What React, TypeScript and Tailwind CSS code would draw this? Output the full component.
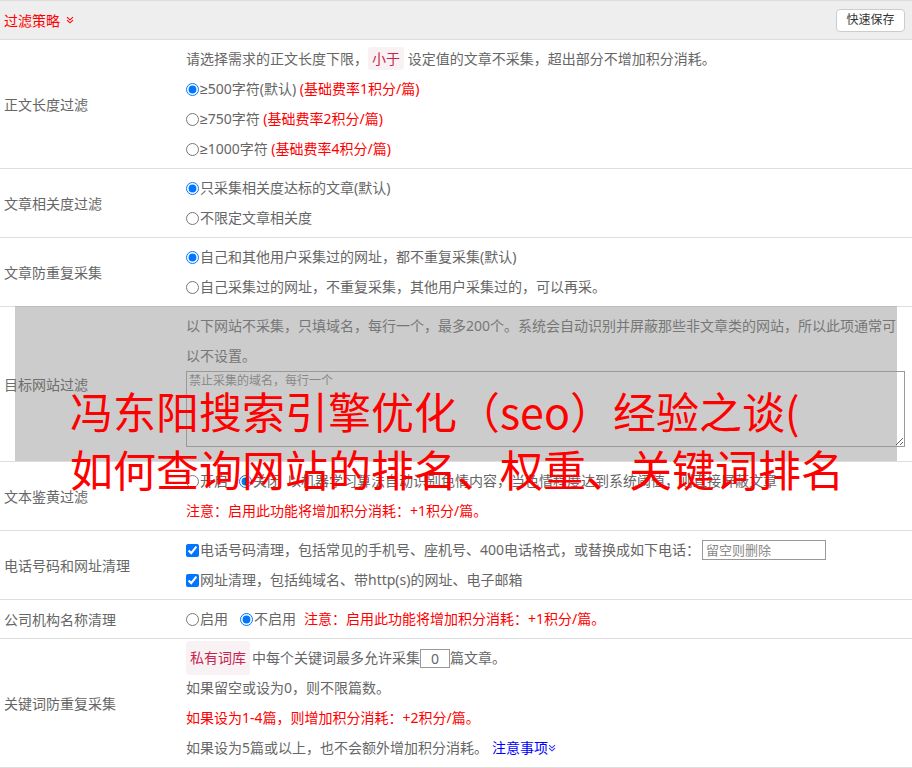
import type { ReactNode } from "react";

const font = "font-['Noto_Sans','Noto_Sans_CJK_SC',sans-serif]";

const Chevrons = ({ color }: { color: string }) => (
  <svg width="8" height="8" viewBox="0 0 8 8" className="inline-block align-[1px]">
    <path d="M1 1.2 L4 3.8 L7 1.2" fill="none" stroke={color} strokeWidth="1.1" />
    <path d="M1 4.2 L4 6.8 L7 4.2" fill="none" stroke={color} strokeWidth="1.1" />
  </svg>
);

const Radio = ({ checked = false }: { checked?: boolean }) => (
  <input
    type="radio"
    defaultChecked={checked}
    className="m-0 mr-px h-[13px] w-[13px] align-[-2px]"
  />
);

const Check = () => (
  <input
    type="checkbox"
    defaultChecked
    className="m-0 mr-px h-[13px] w-[13px] align-[-2px]"
  />
);

const Tag = ({ children }: { children: ReactNode }) => (
  <span className="rounded-[3px] bg-[#f9f2f4] px-[4px] py-[2px] text-[#c7254e]">
    {children}
  </span>
);

const Ge = () => <span className="font-['Liberation_Sans',sans-serif]">≥</span>;

const Row = ({ label, children }: { label: string; children: ReactNode }) => (
  <div className="flex border-b border-[#ddd]">
    <div className="flex w-[186px] shrink-0 items-center pl-1 text-[14px] text-[#666]">
      {label}
    </div>
    <div className="relative z-10 flex-1 py-1 text-[14px] leading-[30px] text-[#666]">
      {children}
    </div>
  </div>
);

export default function App() {
  return (
    <div className={`relative min-h-screen w-[912px] overflow-hidden bg-white ${font}`}>
      <div className="flex h-[40px] items-center justify-between border-y border-[#ddd] bg-[#eee] pl-1 pr-[7px]">
        <div className="flex items-center gap-[6px] text-[14px] text-[#f00]">
          过滤策略
          <Chevrons color="#f00" />
        </div>
        <button className="h-[23px] w-[69px] rounded-[4px] border border-[#ccc] bg-white text-[12px] text-[#333]">
          快速保存
        </button>
      </div>

      <Row label="正文长度过滤">
        <div>
          请选择需求的正文长度下限，<Tag>小于</Tag> 设定值的文章不采集，超出部分不增加积分消耗。
        </div>
        <div>
          <Radio checked />
          <Ge />500字符(默认) <span className="text-[#f00]">(基础费率1积分/篇)</span>
        </div>
        <div>
          <Radio />
          <Ge />750字符 <span className="text-[#f00]">(基础费率2积分/篇)</span>
        </div>
        <div>
          <Radio />
          <Ge />1000字符 <span className="text-[#f00]">(基础费率4积分/篇)</span>
        </div>
      </Row>

      <Row label="文章相关度过滤">
        <div>
          <Radio checked />只采集相关度达标的文章(默认)
        </div>
        <div>
          <Radio />不限定文章相关度
        </div>
      </Row>

      <Row label="文章防重复采集">
        <div>
          <Radio checked />自己和其他用户采集过的网址，都不重复采集(默认)
        </div>
        <div>
          <Radio />自己采集过的网址，不重复采集，其他用户采集过的，可以再采。
        </div>
      </Row>

      <div className="relative flex border-b border-[#ddd]">
        <div className="absolute -top-px bottom-0 left-[15px] right-[15px] border-t border-[#bcbcbc] bg-[#ccc]" />
        <div className="relative z-10 flex w-[186px] shrink-0 items-center pl-1 text-[14px] text-[#6e6e6e]">
          目标网站过滤
        </div>
        <div className="relative z-10 flex-1 py-1 text-[14px] leading-[30px] text-[#777]">
          <div className="whitespace-nowrap">
            以下网站不采集，只填域名，每行一个，最多200个。系统会自动识别并屏蔽那些非文章类的网站，所以此项通常可
          </div>
          <div>以不设置。</div>
          <textarea
            placeholder="禁止采集的域名，每行一个"
            className="mb-[10px] block h-[76px] w-[719px] border border-[#999] bg-transparent px-[2px] py-0 text-[12px] leading-[18px] text-[#666] placeholder:text-[#888]"
          />
        </div>
      </div>

      <Row label="文本鉴黄过滤">
        <div className="whitespace-nowrap">
          <Radio />开启
          <span className="ml-[11px]" />
          <Radio checked />关闭
          <span className="ml-[6px]">
            以机器学习算法自动识别色情内容，当色情程度达到系统阈值，则直接屏蔽文章
          </span>
        </div>
        <div className="text-[#f00]">注意：启用此功能将增加积分消耗：+1积分/篇。</div>
      </Row>

      <Row label="电话号码和网址清理">
        <div className="flex h-[30px] items-center whitespace-nowrap">
          <span>
            <Check />电话号码清理，包括常见的手机号、座机号、400电话格式，或替换成如下电话：
          </span>
          <input
            placeholder="留空则删除"
            className="ml-[2px] h-[20px] w-[124px] border border-[#999] px-[3px] text-[13px] leading-[18px] text-[#666] placeholder:text-[#888]"
          />
        </div>
        <div>
          <Check />网址清理，包括纯域名、带http(s)的网址、电子邮箱
        </div>
      </Row>

      <Row label="公司机构名称清理">
        <div className="whitespace-nowrap">
          <Radio />启用
          <span className="ml-[12px]" />
          <Radio checked />不启用
          <span className="ml-[8px] text-[#f00]">注意：启用此功能将增加积分消耗：+1积分/篇。</span>
        </div>
      </Row>

      <Row label="关键词防重复采集">
        <div className="flex h-[30px] items-center whitespace-nowrap">
          <Tag>私有词库</Tag>
          <span className="ml-[2px]">中每个关键词最多允许采集</span>
          <input
            defaultValue="0"
            className="h-[19px] w-[30px] border border-[#999] text-center text-[14px] leading-[17px] text-[#666]"
          />
          <span>篇文章。</span>
        </div>
        <div>如果留空或设为0，则不限篇数。</div>
        <div className="text-[#f00]">如果设为1-4篇，则增加积分消耗：+2积分/篇。</div>
        <div className="whitespace-nowrap">
          如果设为5篇或以上，也不会额外增加积分消耗。
          <span className="ml-[4px] text-[#00f]">
            注意事项
            <Chevrons color="#33f" />
          </span>
        </div>
      </Row>

      <div className="pointer-events-none absolute left-[70px] top-[381px] z-20 whitespace-nowrap text-[43px] leading-[58px] text-[#f00] font-['Noto_Sans_CJK_SC',sans-serif]">
        <div>冯东阳搜索引擎优化（seo）经验之谈(</div>
        <div>如何查询网站的排名、权重、关键词排名</div>
      </div>
    </div>
  );
}
